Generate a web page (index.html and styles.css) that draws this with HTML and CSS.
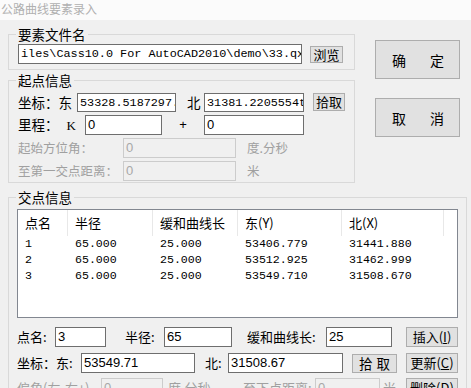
FILE: index.html
```html
<!DOCTYPE html>
<html>
<head>
<meta charset="utf-8">
<link rel="stylesheet" href="styles.css">
</head>
<body>
<div class="title">公路曲线要素录入</div>
<div class="main">
  <div class="top">
    <div class="leftcol">
      <section class="grp g1">
        <div class="legend">要素文件名</div>
        <div class="row">
          <div class="inp mono w-file">iles\Cass10.0 For AutoCAD2010\demo\33.qx</div>
          <button class="btn b-browse">浏览</button>
        </div>
      </section>
      <section class="grp g2">
        <div class="legend">起点信息</div>
        <div class="row r1">
          <span class="lbl big w-zb">坐标：东</span>
          <div class="inp mono w-e">53328.5187297.</div>
          <span class="lbl big w-bei">北</span>
          <div class="inp mono w-n">31381.2205554t</div>
          <button class="btn b-pick">拾取</button>
        </div>
        <div class="row">
          <span class="lbl big w-lc">里程：<span class="k">K</span></span>
          <div class="inp sans w-k">0</div>
          <span class="lbl plus">+</span>
          <div class="inp sans w-n">0</div>
        </div>
        <div class="row">
          <span class="lbl dis w-az">起始方位角：</span>
          <div class="inp dinp sans w-az-in">0</div>
          <span class="lbl dis unit">度.分秒</span>
        </div>
        <div class="row">
          <span class="lbl dis w-az">至第一交点距离：</span>
          <div class="inp dinp sans w-az-in">0</div>
          <span class="lbl dis unit">米</span>
        </div>
      </section>
    </div>
    <div class="rightcol">
      <button class="bigbtn"><span>确</span><span>定</span></button>
      <button class="bigbtn"><span>取</span><span>消</span></button>
    </div>
  </div>
  <section class="grp g3">
    <div class="legend">交点信息</div>
    <div class="list">
      <div class="lrow lhead">
        <span class="c c1">点名</span><span class="c c2">半径</span><span class="c c3">缓和曲线长</span><span class="c c4">东(Y)</span><span class="c c5">北(X)</span><span class="c c6"></span>
      </div>
      <div class="lrow ldata">
        <span class="c c1">1</span><span class="c c2">65.000</span><span class="c c3">25.000</span><span class="c c4">53406.779</span><span class="c c5">31441.880</span>
      </div>
      <div class="lrow ldata">
        <span class="c c1">2</span><span class="c c2">65.000</span><span class="c c3">25.000</span><span class="c c4">53512.925</span><span class="c c5">31462.999</span>
      </div>
      <div class="lrow ldata">
        <span class="c c1">3</span><span class="c c2">65.000</span><span class="c c3">25.000</span><span class="c c4">53549.710</span><span class="c c5">31508.670</span>
      </div>
    </div>
    <div class="row ra">
      <span class="lbl w-dm">点名:</span>
      <div class="inp sans w-dm-in">3</div>
      <span class="lbl w-bj">半径:</span>
      <div class="inp sans w-bj-in">65</div>
      <span class="lbl w-hh">缓和曲线长:</span>
      <div class="inp sans w-hh-in">25</div>
      <button class="btn b-side">插入(<u>I</u>)</button>
    </div>
    <div class="row rb">
      <span class="lbl w-zb2">坐标：东:</span>
      <div class="inp sans w-e2">53549.71</div>
      <span class="lbl w-bei2">北:</span>
      <div class="inp sans w-n2">31508.67</div>
      <button class="btn b-pick2"><span>拾</span><span>取</span></button>
      <button class="btn b-side b-upd">更新(<u>C</u>)</button>
    </div>
    <div class="row rc">
      <span class="lbl dis w-pj">偏角(左-右+)</span>
      <div class="inp dinp sans w-pj-in">0</div>
      <span class="lbl dis w-dfm">度.分秒</span>
      <span class="lbl dis w-zx">至下点距离:</span>
      <div class="inp dinp sans w-zx-in">0</div>
      <span class="lbl dis w-mi">米</span>
      <button class="btn b-side">删除(<u>D</u>)</button>
    </div>
  </section>
</div>
</body>
</html>
```

FILE: styles.css
```css
* { box-sizing: border-box; }
html, body { margin: 0; padding: 0; }
body {
  width: 471px;
  height: 388px;
  overflow: hidden;
  background: #f0f0f0;
  font-family: "Noto Sans CJK SC", "Liberation Sans", sans-serif;
  font-size: 13px;
  color: #000;
}
.title {
  height: 20px;
  background: #fbfbfb;
  color: #b0b0b0;
  font-size: 12px;
  line-height: 18px;
  padding-left: 1px;
}
.main { padding-left: 8px; }
.top { display: flex; margin-top: 14px; }
.leftcol { width: 347px; }
.rightcol {
  margin-left: 20px;
  padding-top: 6px;
  display: flex;
  flex-direction: column;
  gap: 19px;
}
.bigbtn {
  width: 85px;
  height: 39px;
  background: #e1e1e1;
  border: 1px solid #adadad;
  font-family: inherit;
  font-size: 14px;
  color: #000;
  display: flex;
  align-items: center;
  justify-content: space-between;
  padding: 0 15px 0 16px;
}

/* group boxes */
.grp {
  border: 1px solid #d9d9d9;
  padding: 0 0 0 9px;
}
.grp .legend {
  width: max-content;
  height: 14px;
  margin: -8px 0 0 -2px;
  padding: 0 2px;
  background: #f0f0f0;
  font-size: 13.5px;
  line-height: 14px;
}
.g1 { padding-bottom: 5px; }
.g1 .row { margin-top: 3px; }
.g2 { margin-top: 10px; padding-bottom: 1px; }
.g2 .row { margin-top: 3px; }
.g2 .row.r1 { margin-top: 5px; }
.g3 {
  margin-top: 14px;
  width: 459px;
  padding-left: 8px;
  height: 200px;
}
.g3 .legend { margin-left: -1px; }
.g3 .list { margin-top: 5px; }

.row { display: flex; align-items: center; height: 20px; }
.lbl { white-space: nowrap; line-height: 16px; flex: none; }
.lbl.big { font-size: 13.5px; }
.dis { color: #a0a0a0; }

.inp {
  flex: none;
  height: 20px;
  background: #fff;
  border: 1px solid #6e6e6e;
  white-space: nowrap;
  overflow: hidden;
  padding: 0 2px;
  line-height: 18px;
}
.dinp { background: #f0f0f0; border-color: #cccccc; color: #a8a8a8; }
.mono { font-family: "Liberation Mono", monospace; font-size: 11.8px; }
.sans { font-family: "Liberation Sans", sans-serif; font-size: 13px; }

.btn {
  flex: none;
  background: #e1e1e1;
  border: 1px solid #adadad;
  font-family: inherit;
  font-size: 13px;
  color: #000;
  padding: 0;
  line-height: 16px;
}

/* group 1 */
.w-file { width: 284px; }
.b-browse { margin-left: 8px; width: 33px; height: 17px; }

/* group 2 */
.r1 .inp { height: 19px; }
.w-zb { width: 59px; }
.w-e { width: 99px; }
.w-bei { width: 28px; padding-left: 11px; }
.w-n { width: 100px; }
.b-pick { margin-left: 9px; width: 32px; height: 18px; }
.w-lc { width: 67px; }
.k { display: inline-block; margin-left: 8px; font-family: "Liberation Serif", serif; font-size: 13px; }
.w-k { width: 77px; }
.plus { width: 42px; text-align: center; font-family: "Liberation Sans", sans-serif; }
.w-az { width: 105px; font-size: 12.5px; }
.w-az-in { width: 113px; }
.unit { margin-left: 11px; font-size: 12.5px; }

/* list */
.list {
  width: 441px;
  height: 109px;
  background: #fff;
  border: 1px solid #828790;
}
.lrow { display: flex; }
.lhead { height: 26px; align-items: center; }
.lhead .c { height: 26px; line-height: 26px; border-right: 1px solid #e8e8e8; font-size: 13px; }
.lhead .c6 { border-right: none; }
.ldata { height: 16px; line-height: 16px; font-family: "Liberation Mono", monospace; font-size: 11.6px; }
.c { flex: none; padding-left: 7px; white-space: nowrap; }
.c1 { width: 50px; }
.c2 { width: 85px; }
.c3 { width: 85px; }
.c4 { width: 104px; }
.c5 { width: 102px; }
.c6 { width: 10px; }

/* bottom rows */
.ra { margin-top: 9px; }
.rb { margin-top: 6px; }
.rc { margin-top: 5px; }
.w-dm { width: 38px; }
.w-dm-in { width: 51px; }
.w-bj { width: 58px; padding-left: 19px; }
.w-bj-in { width: 68px; }
.w-hh { width: 94px; padding-left: 15px; }
.w-hh-in { width: 66px; }
.b-side { margin-left: 14px; width: 52px; height: 20px; }
.w-zb2 { width: 64px; }
.w-e2 { width: 114px; }
.w-bei2 { width: 33px; padding-left: 10px; }
.w-n2 { width: 115px; }
.b-pick2 {
  margin-left: 9px;
  width: 45px;
  height: 19px;
  display: flex;
  justify-content: space-between;
  padding: 0 6px;
  font-size: 13.5px;
}
.b-upd { margin-left: 9px; }
.w-pj { width: 84px; }
.w-pj-in { width: 62px; }
.w-dfm { width: 80px; padding-left: 5px; }
.w-zx { width: 72px; }
.w-zx-in { width: 65px; }
.w-mi { width: 12px; padding-left: 3px; }
```
